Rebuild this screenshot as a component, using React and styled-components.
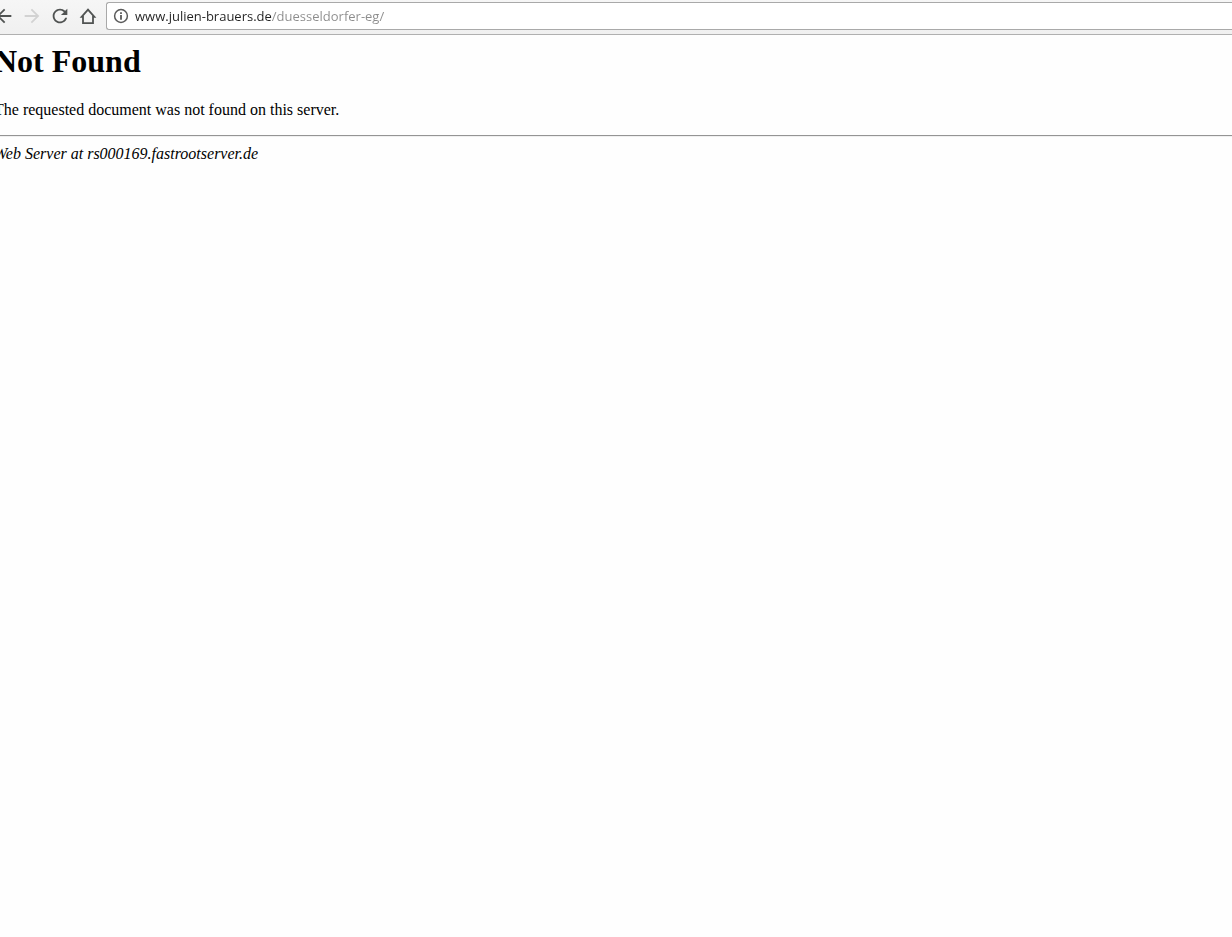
import React, { useState } from 'react'
import styled, { createGlobalStyle } from 'styled-components'
import { MdArrowBack, MdArrowForward, MdRefresh } from 'react-icons/md'

const App = () => {
  const [url, setUrl] = useState('www.julien-brauers.de/duesseldorfer-eg/')

  return (
    <Wrapper>
      <GlobalStyle />
      <Toolbar>
        <NavButton aria-label="Back">
          <MdArrowBack />
        </NavButton>
        <NavButton aria-label="Forward" disabled>
          <MdArrowForward />
        </NavButton>
        <NavButton aria-label="Reload">
          <MdRefresh />
        </NavButton>
        <NavButton aria-label="Home">
          <HomeIcon />
        </NavButton>
        <AddressBar>
          <InfoIcon />
          <AddressInput
            aria-label="Address"
            spellCheck={false}
            value={url}
            onChange={e => setUrl(e.target.value)}
          />
        </AddressBar>
      </Toolbar>

      <Page>
        <Title>Not Found</Title>
        <Message>The requested document was not found on this server.</Message>
        <Divider />
        <Server>Web Server at rs000169.fastrootserver.de</Server>
      </Page>
    </Wrapper>
  )
}

const HomeIcon = () => (
  <svg viewBox="0 0 22 22" fill="none" stroke="currentColor" strokeWidth="1.8">
    <path d="M4.6 11.9 11 4.6l6.4 7.3H16v6.2H6v-6.2z" />
  </svg>
)

const InfoIcon = () => (
  <svg width="16" height="16" viewBox="0 0 16 16" aria-hidden="true">
    <circle cx="8" cy="8" r="6.4" fill="none" stroke="#5a5a5a" strokeWidth="1.5" />
    <path d="M7.1 4.3h1.8V6H7.1zM7.1 7h1.8v4.8H7.1z" fill="#5a5a5a" />
  </svg>
)

export default App

const GlobalStyle = createGlobalStyle`
  body {
    margin: 0;
    background: #fefefe;
  }
`

const Wrapper = styled.div`
  overflow: hidden;
`

const Toolbar = styled.header`
  display: flex;
  align-items: center;
  margin-left: -10px;
  padding: 2px 0 4px;
  border-bottom: 1px solid #b0b0b0;
  background: linear-gradient(#f6f6f6, #f0f0f0);
`

const NavButton = styled.button`
  display: flex;
  align-items: center;
  justify-content: center;
  flex: none;
  width: 28px;
  height: 28px;
  padding: 0;
  border: 0;
  background: none;
  color: #505352;

  &:disabled {
    color: #d2d2d2;
  }

  svg {
    width: 22px;
    height: 22px;
  }
`

const AddressBar = styled.div`
  display: flex;
  align-items: center;
  flex: 1;
  gap: 6px;
  box-sizing: border-box;
  height: 28px;
  margin-left: 4px;
  padding-left: 6px;
  border: 1px solid #a9a9a9;
  border-right: 0;
  border-radius: 3px 0 0 3px;
  background: #fff;
`

// the host part is dark, the path after it is grey
const AddressInput = styled.input`
  flex: 1;
  height: 24px;
  padding: 0;
  border: 0;
  outline: 0;
  font: 13px/24px 'Open Sans', sans-serif;
  background: linear-gradient(to right, #222 137px, #8c8c8c 137px);
  background-clip: text;
  -webkit-background-clip: text;
  -webkit-text-fill-color: transparent;
`

const Page = styled.main`
  margin-left: -6px;
  font-family: 'Liberation Serif', serif;
  font-size: 16px;
  line-height: 18px;
  color: #000;
`

const Title = styled.h1`
  margin: 8px 0 21px;
  font-size: 32px;
  line-height: 37px;
`

const Message = styled.p`
  margin: 0 0 16px;
`

const Divider = styled.hr`
  margin: 0 0 8px;
  border: 0;
  border-top: 1px solid #949494;
  border-bottom: 1px solid #f0f0f0;
`

const Server = styled.address`
  font-style: italic;
`
